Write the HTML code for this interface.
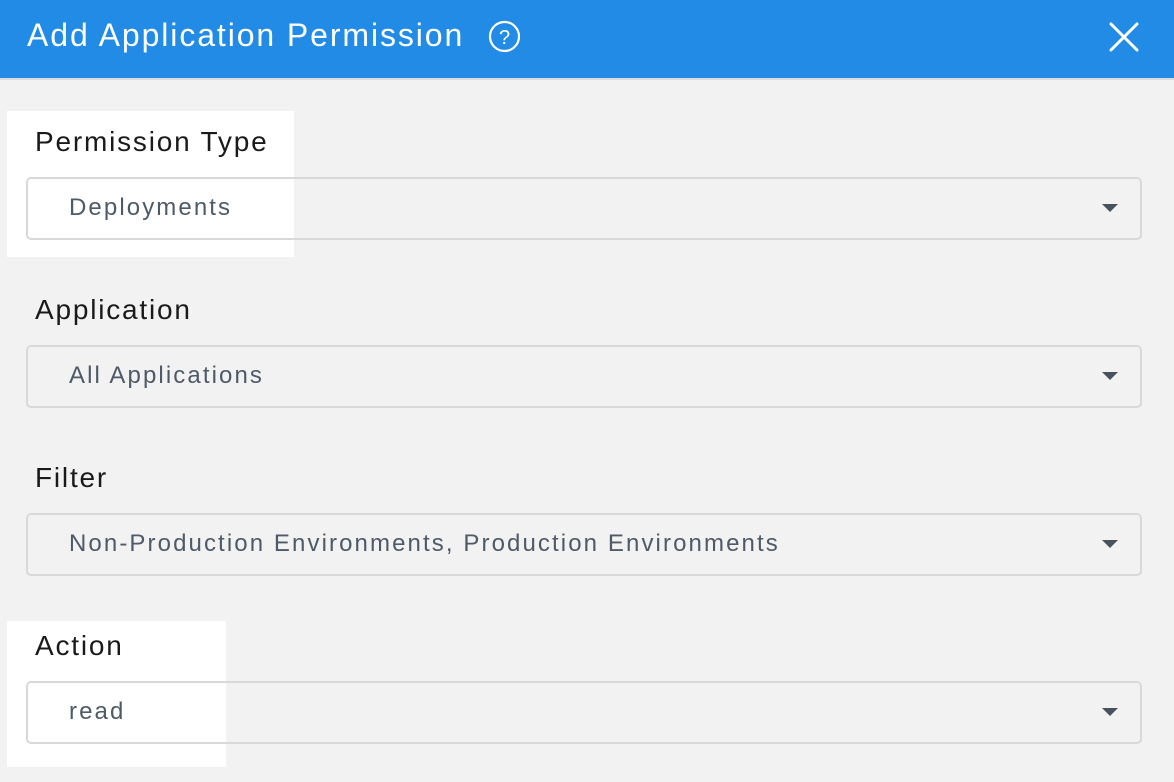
<!DOCTYPE html>
<html><head><style>
*{margin:0;padding:0;box-sizing:border-box}
body{width:1174px;height:782px;background:#f2f2f2;font-family:"Liberation Sans",sans-serif;position:relative;overflow:hidden}
.hdr{position:absolute;left:0;top:0;width:1174px;height:80px;background:#218be6;border-bottom:2px solid #dcdcdc}
.title{position:absolute;left:27px;top:17px;color:#fff;font-size:32px;letter-spacing:1.9px}
.hl{position:absolute;background:#fff}
.lbl{position:absolute;left:35px;font-size:28px;color:#1a1a1a;letter-spacing:1.8px}
.fld{position:absolute;left:26px;width:1116px;height:63px;border:2px solid #d9d9dc;border-radius:5px}
.val{position:absolute;left:41px;top:15px;font-size:24px;color:#4f5a68;letter-spacing:2.1px}
.arr{position:absolute;right:22px;top:25px;width:0;height:0;border-left:8px solid transparent;border-right:8px solid transparent;border-top:8px solid #4a5260}
</style></head><body>
<div class="hdr">
<div class="title">Add Application Permission</div>
<svg style="position:absolute;left:488px;top:20px" width="33" height="33" viewBox="0 0 33 33"><circle cx="16.5" cy="16.5" r="14.5" fill="none" stroke="#fff" stroke-width="2.2"/><text x="16.5" y="24" text-anchor="middle" font-family="Liberation Sans" font-size="20" fill="#fff">?</text></svg>
<svg style="position:absolute;left:1108px;top:22px" width="32" height="30" viewBox="0 0 32 30"><path d="M3 2L29 28M29 2L3 28" stroke="#fff" stroke-width="3" stroke-linecap="round"/></svg>
</div>
<div class="hl" style="left:7px;top:111px;width:287px;height:146px"></div>
<div class="hl" style="left:7px;top:621px;width:219px;height:146px"></div>

<div class="lbl" style="top:126px">Permission Type</div>
<div class="fld" style="top:177px;background:linear-gradient(90deg,#fff 266px,transparent 266px)"><div class="val">Deployments</div><div class="arr"></div></div>

<div class="lbl" style="top:294px">Application</div>
<div class="fld" style="top:345px"><div class="val">All Applications</div><div class="arr"></div></div>

<div class="lbl" style="top:462px">Filter</div>
<div class="fld" style="top:513px"><div class="val">Non-Production Environments, Production Environments</div><div class="arr"></div></div>

<div class="lbl" style="top:630px">Action</div>
<div class="fld" style="top:681px;background:linear-gradient(90deg,#fff 198px,transparent 198px)"><div class="val">read</div><div class="arr"></div></div>
</body></html>
